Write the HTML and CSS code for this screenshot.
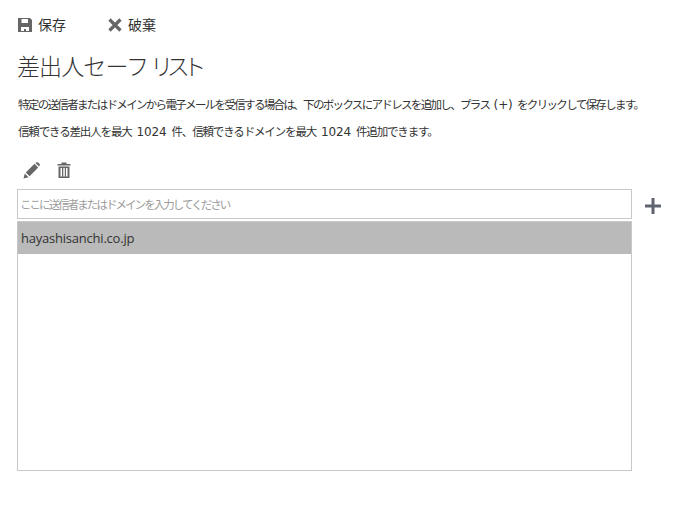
FILE: index.html
```html
<!DOCTYPE html>
<html lang="ja">
<head>
<meta charset="utf-8">
<title>差出人セーフ リスト</title>
<link rel="stylesheet" href="styles.css">
</head>
<body>
<div class="toolbar">
  <button class="cmd cmd-save" type="button">
    <svg class="ico" width="14" height="14" viewBox="0 0 14 14"><path fill="#666" fill-rule="evenodd" d="M0 0H12L14 2V14H0ZM3.5 1V5H10V1ZM3 9V13H6V11H8V13H11V9Z"/></svg>
    <span>保存</span>
  </button>
  <button class="cmd" type="button">
    <svg class="ico" width="14" height="14" viewBox="0 0 14 14"><path fill="none" stroke="#666" stroke-width="3.2" d="M1.5 1.5L12.5 12.5M12.5 1.5L1.5 12.5"/></svg>
    <span>破棄</span>
  </button>
</div>
<h1 class="title">差出人セーフ <span class="title-tail">リスト</span></h1>
<p class="desc desc-first">特定の送信者またはドメインから電子メールを受信する場合は、下のボックスにアドレスを追加し、プラス <span class="num">(+)</span> をクリックして保存します。</p>
<p class="desc desc-second">信頼できる差出人を最大 <span class="num">1024</span> 件、信頼できるドメインを最大 <span class="num">1024</span> 件追加できます。</p>
<div class="actions">
  <svg width="17" height="17" viewBox="0 0 17 17"><path fill="#666" d="M0.5 16.5L1.8 11.5L5.5 15.2ZM2.8 10.4L11.5 1.8L15.2 5.5L6.6 14.2ZM12.4 0.9L13.5 0.3C14.2 0 14.8 0.1 15.4 0.7L16.3 1.6C16.9 2.2 17 2.8 16.7 3.5L16.1 4.6Z"/></svg>
  <svg width="14" height="16" viewBox="0 0 14 16"><path fill="#666" fill-rule="evenodd" d="M0.5 2H4.5V0.5H9.5V2H13.5V3.5H0.5ZM1.5 4.5H12.5V16H1.5ZM3.5 6V14.5H5V6ZM6.3 6V14.5H7.8V6ZM9 6V14.5H10.5V6Z"/></svg>
</div>
<div class="editor">
  <div class="fields">
    <input class="entry" type="text" placeholder="ここに送信者またはドメインを入力してください">
    <ul class="list">
      <li class="row-selected">hayashisanchi.co.jp</li>
    </ul>
  </div>
  <button class="add" type="button" aria-label="追加">
    <svg width="16" height="16" viewBox="0 0 16 16"><path fill="#5f6470" d="M6.5 0H9.5V6.5H16V9.5H9.5V16H6.5V9.5H0V6.5H6.5Z"/></svg>
  </button>
</div>
</body>
</html>
```
FILE: styles.css
```css
* { box-sizing: border-box; }
html, body { margin: 0; padding: 0; }
body {
  width: 700px;
  height: 517px;
  overflow: hidden;
  padding: 17px 0 0 18px;
  background: #fff;
  color: #333;
  font-family: "Open Sans", "Noto Sans CJK JP", sans-serif;
}
.toolbar { display: flex; height: 16px; align-items: center; }
.cmd {
  display: flex;
  align-items: center;
  gap: 6px;
  padding: 0;
  border: 0;
  background: none;
  color: #333;
  font: inherit;
  font-size: 14px;
  line-height: 16px;
}
.cmd-save { width: 90px; }
.ico { flex: none; }
.title {
  margin: 15px 0 0 -1px;
  font-size: 23px;
  font-weight: 300;
  line-height: 36px;
  letter-spacing: -0.9px;
  word-spacing: -3px;
  color: #333;
  white-space: nowrap;
}
.title-tail { letter-spacing: -6.5px; }
.desc {
  margin: 0;
  font-size: 11.5px;
  line-height: 16px;
  white-space: nowrap;
}
.desc-first { margin-top: 13px; letter-spacing: -1.67px; word-spacing: 3px; }
.desc-second { margin-top: 11px; letter-spacing: -1.15px; word-spacing: 3px; }
.num {
  font-family: "DejaVu Sans", sans-serif;
  font-size: 12px;
  letter-spacing: -0.1px;
}
.actions {
  display: flex;
  align-items: center;
  gap: 17px;
  height: 18px;
  margin: 21px 0 0 5px;
}
.editor { display: flex; margin: 10px 0 0 -1px; }
.fields { width: 615px; display: flex; flex-direction: column; gap: 2px; }
.entry {
  width: 100%;
  height: 30px;
  padding: 0 2px;
  border: 1px solid #c8c8c8;
  outline: 0;
  background: #fff;
  color: #333;
  font: inherit;
  font-size: 11.5px;
  letter-spacing: -1.95px;
}
.entry::placeholder { color: #9c9c9c; opacity: 1; }
.list {
  height: 250px;
  margin: 0;
  padding: 0;
  list-style: none;
  border: 1px solid #c8c8c8;
}
.row-selected {
  height: 32px;
  padding: 0 3px;
  background: #bababa;
  color: #333;
  font-size: 13px;
  letter-spacing: -0.22px;
  line-height: 33px;
}
.add {
  align-self: flex-start;
  width: 16px;
  height: 16px;
  margin: 9px 0 0 13px;
  padding: 0;
  border: 0;
  background: none;
}
.add svg { display: block; }
```
